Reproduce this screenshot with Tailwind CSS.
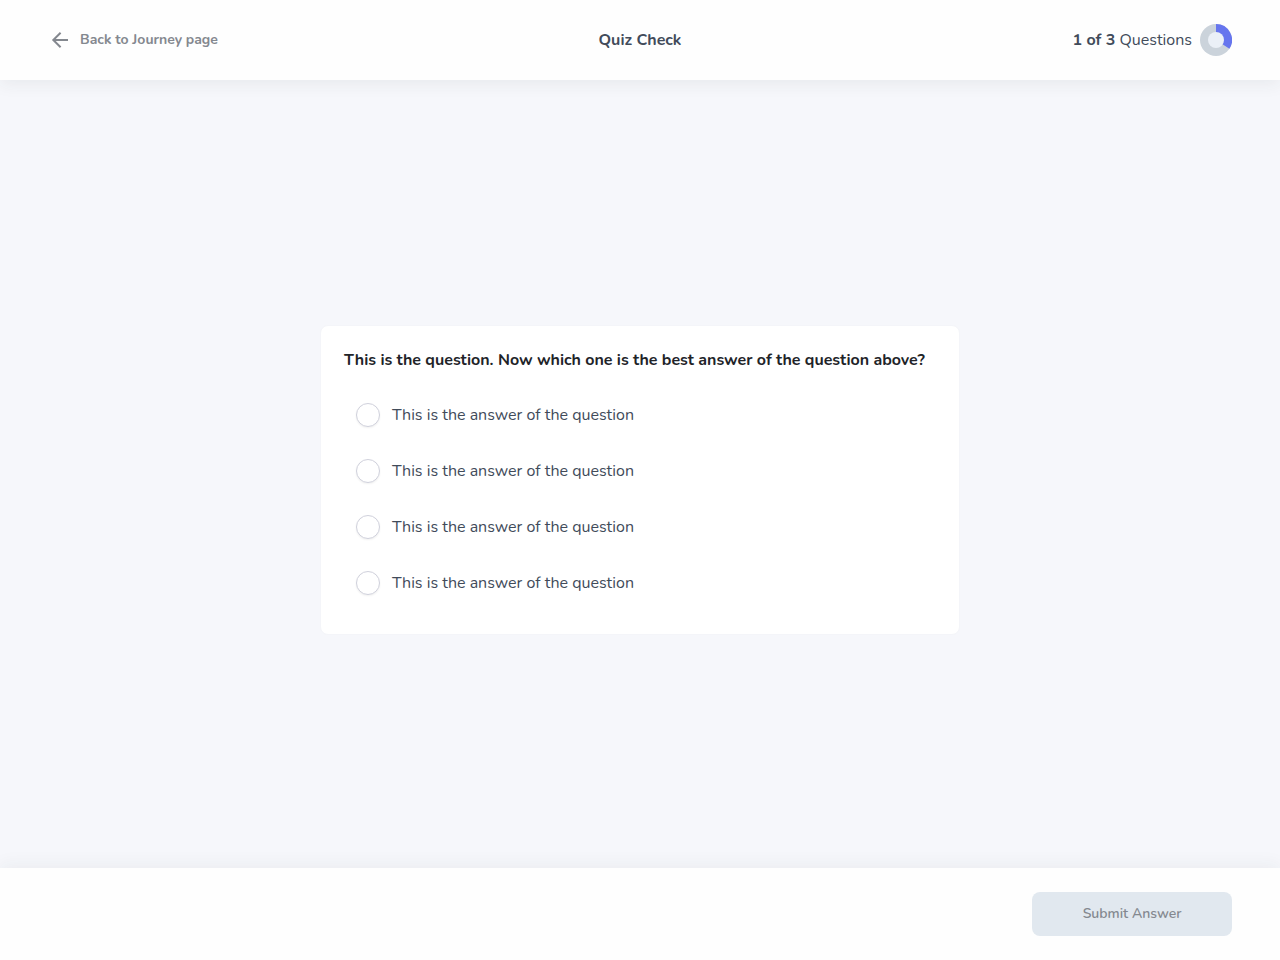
<!DOCTYPE html>
<html lang="en">
<head>
<meta charset="utf-8">
<meta name="viewport" content="width=device-width, initial-scale=1">
<title>Quiz Check</title>
<script src="https://cdn.jsdelivr.net/npm/@tailwindcss/browser@4"></script>
</head>
<body class="flex min-h-screen flex-col bg-[#f6f7fb] font-[Nunito,Lato,sans-serif] text-base text-[#414b5a]">
  <header class="grid h-20 shrink-0 grid-cols-[1fr_auto_1fr] items-center bg-[#fefefe] px-12 shadow-[0_4px_16px_rgba(40,50,60,0.07)]">
    <a href="#" class="flex items-center gap-2 justify-self-start text-sm font-bold text-[#84888f]">
      <svg class="size-6" viewBox="0 0 24 24" fill="none" stroke="currentColor" stroke-width="2" aria-hidden="true"><path d="M20 12H5.500M12.600 4.700L5.300 12l7.300 7.300"/></svg>
      Back to Journey page
    </a>
    <h1 class="font-bold">Quiz Check</h1>
    <div class="flex items-center gap-2 justify-self-end">
      <p><strong class="font-bold">1 of 3</strong> Questions</p>
      <svg class="size-8" viewBox="0 0 32 32" role="img" aria-label="One third complete"><circle cx="16" cy="16" r="16" fill="#cbd3db"/><path d="M16 16V0A16 16 0 0 1 29.400 24.800Z" fill="#6675ee"/><circle cx="16" cy="16" r="8" fill="#ebf0f7"/></svg>
    </div>
  </header>

  <main class="flex grow items-center justify-center pt-3">
    <form id="quiz" class="w-full max-w-[640px] rounded-lg border border-[#f4f5f9] bg-white px-[23px] py-[23px]">
      <fieldset>
        <legend class="mb-4 font-bold leading-[22px] text-[#212328]">This is the question. Now which one is the best answer of the question above?</legend>
        <label class="flex h-14 items-center gap-3 px-3"><input type="radio" name="answer" value="1" class="size-6 shrink-0 appearance-none rounded-full border border-[#d0d1dc] bg-white shadow-[0_1px_2px_rgba(0,0,0,0.06)] checked:border-8 checked:border-[#6675ee]">This is the answer of the question</label>
        <label class="flex h-14 items-center gap-3 px-3"><input type="radio" name="answer" value="2" class="size-6 shrink-0 appearance-none rounded-full border border-[#d0d1dc] bg-white shadow-[0_1px_2px_rgba(0,0,0,0.06)] checked:border-8 checked:border-[#6675ee]">This is the answer of the question</label>
        <label class="flex h-14 items-center gap-3 px-3"><input type="radio" name="answer" value="3" class="size-6 shrink-0 appearance-none rounded-full border border-[#d0d1dc] bg-white shadow-[0_1px_2px_rgba(0,0,0,0.06)] checked:border-8 checked:border-[#6675ee]">This is the answer of the question</label>
        <label class="flex h-14 items-center gap-3 px-3"><input type="radio" name="answer" value="4" class="size-6 shrink-0 appearance-none rounded-full border border-[#d0d1dc] bg-white shadow-[0_1px_2px_rgba(0,0,0,0.06)] checked:border-8 checked:border-[#6675ee]">This is the answer of the question</label>
      </fieldset>
    </form>
  </main>

  <footer class="flex shrink-0 justify-end bg-[#fefefe] px-12 py-6 shadow-[0_-4px_16px_rgba(40,50,60,0.05)]">
    <button type="submit" form="quiz" class="h-11 w-[200px] rounded-lg bg-[#e1e8ef] text-sm font-semibold text-[#84888f]">Submit Answer</button>
  </footer>
</body>
</html>
